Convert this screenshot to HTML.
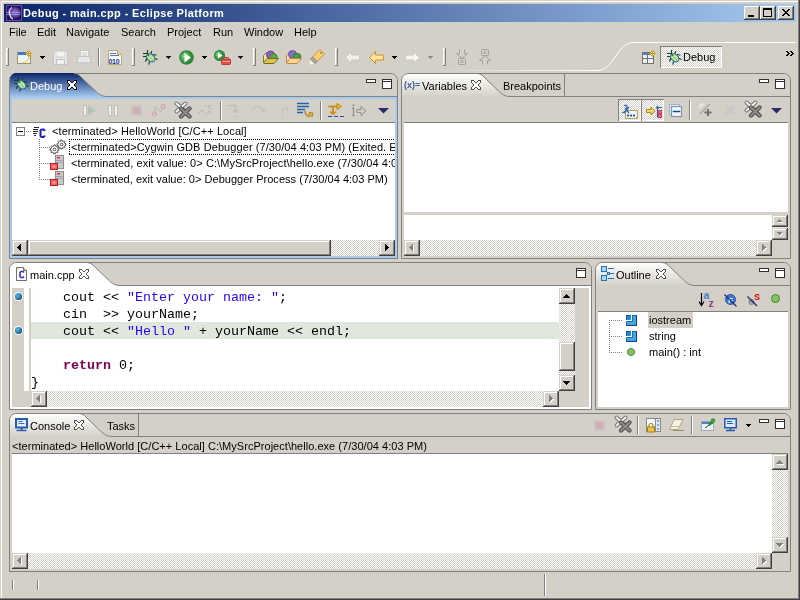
<!DOCTYPE html><html><head><meta charset="utf-8"><style>
*{margin:0;padding:0}
html,body{width:800px;height:600px;overflow:hidden;background:#D4D0C8}
body{position:relative;font:11px 'Liberation Sans',sans-serif}
.a{position:absolute;display:block}
.t{white-space:pre;will-change:transform}
.b3{background:#D4D0C8;box-shadow:inset -1px -1px #404040,inset 1px 1px #D4D0C8,inset -2px -2px #808080,inset 2px 2px #fff}
.ck{background:repeating-conic-gradient(#fff 0 25%,#D4D0C8 0 50%) 0 0/2px 2px}
</style></head><body><div class="a" style="left:1px;top:1px;width:797px;height:1px;background:#fff;"></div>
<div class="a" style="left:1px;top:1px;width:1px;height:597px;background:#fff;"></div>
<div class="a" style="left:798px;top:0px;width:1px;height:599px;background:#808080;"></div>
<div class="a" style="left:0px;top:598px;width:799px;height:1px;background:#808080;"></div>
<div class="a" style="left:799px;top:0px;width:1px;height:600px;background:#404040;"></div>
<div class="a" style="left:0px;top:599px;width:800px;height:1px;background:#404040;"></div>
<div class="a" style="left:4px;top:4px;width:792px;height:18px;background:linear-gradient(to right,#0A246A,#A6CAF0);"></div>
<div class="a t" style="left:23px;top:6.69px;font:bold 11px/13px 'Liberation Sans',sans-serif;color:#fff;letter-spacing:0.37px">Debug - main.cpp - Eclipse Platform</div>
<div class="a" style="left:744px;top:6px;width:16px;height:14px;background:#D4D0C8;box-shadow:inset -1px -1px #404040,inset 1px 1px #fff,inset -2px -2px #808080"></div>
<svg class="a" style="left:744px;top:6px;" width="16" height="14" viewBox="0 0 16 14" shape-rendering="crispEdges"><path d="M4,9h6v2h-6z" fill="#000"/></svg>
<div class="a" style="left:760px;top:6px;width:16px;height:14px;background:#D4D0C8;box-shadow:inset -1px -1px #404040,inset 1px 1px #fff,inset -2px -2px #808080"></div>
<svg class="a" style="left:760px;top:6px;" width="16" height="14" viewBox="0 0 16 14" shape-rendering="crispEdges"><path d="M3,2h9v9h-9z M4,4v6h7v-6z" fill="#000" fill-rule="evenodd"/></svg>
<div class="a" style="left:778px;top:6px;width:16px;height:14px;background:#D4D0C8;box-shadow:inset -1px -1px #404040,inset 1px 1px #fff,inset -2px -2px #808080"></div>
<svg class="a" style="left:778px;top:6px;" width="16" height="14" viewBox="0 0 16 14" shape-rendering="crispEdges"><path d="M4,3h1v1h-1zM5,3h1v1h-1zM10,3h1v1h-1zM11,3h1v1h-1zM5,4h1v1h-1zM6,4h1v1h-1zM9,4h1v1h-1zM10,4h1v1h-1zM6,5h1v1h-1zM7,5h1v1h-1zM8,5h1v1h-1zM9,5h1v1h-1zM7,6h1v1h-1zM8,6h1v1h-1zM6,7h1v1h-1zM7,7h1v1h-1zM8,7h1v1h-1zM9,7h1v1h-1zM5,8h1v1h-1zM6,8h1v1h-1zM9,8h1v1h-1zM10,8h1v1h-1zM4,9h1v1h-1zM5,9h1v1h-1zM10,9h1v1h-1zM11,9h1v1h-1z" fill="#000"/></svg>
<svg class="a" style="left:6px;top:5px;" width="16" height="16" viewBox="0 0 16 16"><defs><radialGradient id="elg" cx="0.5" cy="0.45" r="0.55"><stop offset="0" stop-color="#9A80C8"/><stop offset="0.7" stop-color="#5A3A90"/><stop offset="1" stop-color="#2A1458"/></radialGradient></defs><rect x="0.5" y="0.5" width="15" height="15" fill="#22105A" stroke="#6A4AAA"/><circle cx="9" cy="8" r="6" fill="url(#elg)"/><path d="M1,7.5h13M1,9.5h13" stroke="#8A90F0" stroke-width="1"/><path d="M6,2.5 C3.5,4 3,7 3.5,9 C4,11.5 5,13 7,14" fill="none" stroke="#F0E0F8" stroke-width="1.3"/><path d="M4.5,3.5 L2,5" stroke="#8040C0" stroke-width="1"/></svg>
<div class="a t" style="left:9px;top:25.69px;font:11px/13px 'Liberation Sans',sans-serif;color:#000;">File</div>
<div class="a t" style="left:37px;top:25.69px;font:11px/13px 'Liberation Sans',sans-serif;color:#000;">Edit</div>
<div class="a t" style="left:66px;top:25.69px;font:11px/13px 'Liberation Sans',sans-serif;color:#000;">Navigate</div>
<div class="a t" style="left:121px;top:25.69px;font:11px/13px 'Liberation Sans',sans-serif;color:#000;">Search</div>
<div class="a t" style="left:167px;top:25.69px;font:11px/13px 'Liberation Sans',sans-serif;color:#000;">Project</div>
<div class="a t" style="left:213px;top:25.69px;font:11px/13px 'Liberation Sans',sans-serif;color:#000;">Run</div>
<div class="a t" style="left:244px;top:25.69px;font:11px/13px 'Liberation Sans',sans-serif;color:#000;">Window</div>
<div class="a t" style="left:294px;top:25.69px;font:11px/13px 'Liberation Sans',sans-serif;color:#000;">Help</div>
<svg class="a" style="left:9px;top:73px" width="389" height="186" viewBox="0 0 389 186"><defs><linearGradient id="g9_73" x1="0" y1="0" x2="0" y2="1"><stop offset="0" stop-color="#0A246A"/><stop offset="1" stop-color="#A6CAF0"/></linearGradient></defs><path d="M1,24 V6 L0.5,6 C0.5,4 4,0 6,0 H65 C69,0 71,3 74,6 L86,17.5 C90,21.5 93,23.5 98,23.5 V24 Z" fill="url(#g9_73)"/><path d="M65,0.5 C69,0.5 71,3 74,6 L86,17.5 C90,21.5 93,23.5 98,23.5 H388" fill="none" stroke="#808080" stroke-width="1"/><path d="M0.5,185.5 V6.5 M65,0.5 H382.5 C385,0.5 388.5,4 388.5,6.5 V185.5 H0.5" fill="none" stroke="#808080" stroke-width="1"/></svg>
<div class="a" style="left:10px;top:97px;width:387px;height:2px;background:#A6CAF0;"></div>
<div class="a" style="left:10px;top:256px;width:387px;height:2px;background:#A6CAF0;"></div>
<div class="a" style="left:10px;top:97px;width:2px;height:161px;background:#A6CAF0;"></div>
<div class="a" style="left:395px;top:97px;width:2px;height:161px;background:#A6CAF0;"></div>
<div class="a" style="left:12px;top:122px;width:383px;height:1px;background:#808080;"></div>
<div class="a" style="left:12px;top:123px;width:383px;height:117px;background:#fff;"></div>
<div class="a ck" style="left:12px;top:240px;width:383px;height:16px"></div>
<div class="a b3" style="left:12px;top:240px;width:16px;height:16px;"></div>
<div class="a b3" style="left:28px;top:240px;width:303px;height:16px;"></div>
<div class="a b3" style="left:379px;top:240px;width:16px;height:16px;"></div>
<svg class="a" style="left:401px;top:73px" width="390" height="186" viewBox="0 0 390 186"><defs><linearGradient id="g401_73" x1="0" y1="0" x2="0" y2="1"><stop offset="0" stop-color="#FFFFFF"/><stop offset="1" stop-color="#D4D0C8"/></linearGradient></defs><path d="M1,24 V6.5 C1,4 4,1 6.5,1 H76 C80,1 82,3 85,6 L97,17.5 C101,21.5 104,23.5 109,23.5 V24 Z" fill="url(#g401_73)"/><path d="M76,0.5 C80,0.5 82,3 85,6 L97,17.5 C101,21.5 104,23.5 109,23.5 H389" fill="none" stroke="#808080" stroke-width="1"/><path d="M0.5,185.5 V6.5 C0.5,4 4,0.5 6.5,0.5 H383.5 C386,0.5 389.5,4 389.5,6.5 V185.5 H0.5" fill="none" stroke="#808080" stroke-width="1"/></svg>
<div class="a" style="left:564px;top:74px;width:1px;height:22px;background:#808080;"></div>
<div class="a" style="left:404px;top:122px;width:384px;height:1px;background:#808080;"></div>
<div class="a" style="left:404px;top:123px;width:384px;height:89px;background:#fff;"></div>
<div class="a" style="left:404px;top:215px;width:368px;height:25px;background:#fff;"></div>
<div class="a ck" style="left:772px;top:215px;width:16px;height:25px"></div>
<div class="a b3" style="left:772px;top:215px;width:16px;height:12px;"></div>
<div class="a b3" style="left:772px;top:228px;width:16px;height:12px;"></div>
<div class="a ck" style="left:404px;top:240px;width:368px;height:16px"></div>
<div class="a b3" style="left:404px;top:240px;width:16px;height:16px;"></div>
<div class="a b3" style="left:756px;top:240px;width:16px;height:16px;"></div>
<svg class="a" style="left:9px;top:262px" width="583" height="148" viewBox="0 0 583 148"><defs><linearGradient id="g9_262" x1="0" y1="0" x2="0" y2="1"><stop offset="0" stop-color="#FFFFFF"/><stop offset="1" stop-color="#FFFFFF"/></linearGradient></defs><path d="M1,24 V6.5 C1,4 4,1 6.5,1 H78 C82,1 84,3 87,6 L99,17.5 C103,21.5 106,23.5 111,23.5 V24 Z" fill="url(#g9_262)"/><path d="M78,0.5 C82,0.5 84,3 87,6 L99,17.5 C103,21.5 106,23.5 111,23.5 H582" fill="none" stroke="#808080" stroke-width="1"/><path d="M0.5,147.5 V6.5 C0.5,4 4,0.5 6.5,0.5 H576.5 C579,0.5 582.5,4 582.5,6.5 V147.5 H0.5" fill="none" stroke="#808080" stroke-width="1"/></svg>
<div class="a" style="left:10px;top:286px;width:581px;height:123px;background:#fff;"></div>
<div class="a" style="left:12px;top:288px;width:12px;height:103px;background:#D4D0C8;"></div>
<div class="a ck" style="left:559px;top:288px;width:16px;height:103px"></div>
<div class="a b3" style="left:559px;top:288px;width:16px;height:16px;"></div>
<div class="a b3" style="left:559px;top:342px;width:16px;height:29px;"></div>
<div class="a b3" style="left:559px;top:375px;width:16px;height:16px;"></div>
<div class="a" style="left:575px;top:288px;width:14px;height:119px;background:#D4D0C8;"></div>
<div class="a ck" style="left:31px;top:391px;width:528px;height:16px"></div>
<div class="a b3" style="left:31px;top:391px;width:16px;height:16px;"></div>
<div class="a b3" style="left:543px;top:391px;width:16px;height:16px;"></div>
<div class="a" style="left:12px;top:391px;width:19px;height:16px;background:#D4D0C8;"></div>
<svg class="a" style="left:595px;top:262px" width="196" height="148" viewBox="0 0 196 148"><defs><linearGradient id="g595_262" x1="0" y1="0" x2="0" y2="1"><stop offset="0" stop-color="#FFFFFF"/><stop offset="1" stop-color="#D4D0C8"/></linearGradient></defs><path d="M1,24 V6.5 C1,4 4,1 6.5,1 H67 C71,1 73,3 76,6 L88,17.5 C92,21.5 95,23.5 100,23.5 V24 Z" fill="url(#g595_262)"/><path d="M67,0.5 C71,0.5 73,3 76,6 L88,17.5 C92,21.5 95,23.5 100,23.5 H195" fill="none" stroke="#808080" stroke-width="1"/><path d="M0.5,147.5 V6.5 C0.5,4 4,0.5 6.5,0.5 H189.5 C192,0.5 195.5,4 195.5,6.5 V147.5 H0.5" fill="none" stroke="#808080" stroke-width="1"/></svg>
<div class="a" style="left:598px;top:311px;width:190px;height:1px;background:#808080;"></div>
<div class="a" style="left:598px;top:312px;width:190px;height:95px;background:#fff;"></div>
<svg class="a" style="left:9px;top:413px" width="782" height="159" viewBox="0 0 782 159"><defs><linearGradient id="g9_413" x1="0" y1="0" x2="0" y2="1"><stop offset="0" stop-color="#FFFFFF"/><stop offset="1" stop-color="#D4D0C8"/></linearGradient></defs><path d="M1,24 V6.5 C1,4 4,1 6.5,1 H70 C74,1 76,3 79,6 L91,17.5 C95,21.5 98,23.5 103,23.5 V24 Z" fill="url(#g9_413)"/><path d="M70,0.5 C74,0.5 76,3 79,6 L91,17.5 C95,21.5 98,23.5 103,23.5 H781" fill="none" stroke="#808080" stroke-width="1"/><path d="M0.5,158.5 V6.5 C0.5,4 4,0.5 6.5,0.5 H775.5 C778,0.5 781.5,4 781.5,6.5 V158.5 H0.5" fill="none" stroke="#808080" stroke-width="1"/></svg>
<div class="a" style="left:138px;top:414px;width:1px;height:22px;background:#808080;"></div>
<div class="a" style="left:12px;top:453px;width:776px;height:1px;background:#808080;"></div>
<div class="a" style="left:12px;top:454px;width:760px;height:99px;background:#fff;"></div>
<div class="a ck" style="left:772px;top:454px;width:16px;height:99px"></div>
<div class="a b3" style="left:772px;top:454px;width:16px;height:16px;"></div>
<div class="a b3" style="left:772px;top:537px;width:16px;height:16px;"></div>
<div class="a ck" style="left:12px;top:553px;width:760px;height:16px"></div>
<div class="a b3" style="left:12px;top:553px;width:16px;height:16px;"></div>
<div class="a b3" style="left:756px;top:553px;width:16px;height:16px;"></div>
<div class="a" style="left:12px;top:580px;width:1px;height:10px;background:#808080;"></div>
<div class="a" style="left:13px;top:580px;width:1px;height:10px;background:#fff;"></div>
<div class="a" style="left:37px;top:580px;width:1px;height:10px;background:#808080;"></div>
<div class="a" style="left:38px;top:580px;width:1px;height:10px;background:#fff;"></div>
<div class="a" style="left:544px;top:574px;width:1px;height:22px;background:#808080;"></div>
<div class="a" style="left:545px;top:574px;width:1px;height:22px;background:#fff;"></div>
<div class="a" style="left:6px;top:48px;width:1px;height:17px;background:#fff;"></div>
<div class="a" style="left:6px;top:48px;width:2px;height:1px;background:#fff;"></div>
<div class="a" style="left:8px;top:48px;width:1px;height:18px;background:#808080;"></div>
<div class="a" style="left:6px;top:65px;width:3px;height:1px;background:#808080;"></div>
<svg class="a" style="left:17px;top:50px;" width="15" height="15" viewBox="0 0 15 15"><rect x="0.5" y="2.5" width="13" height="11" fill="#EAF6FC" stroke="#A89060"/><rect x="1" y="2" width="11" height="3" fill="#3C7CC8"/><path d="M12,6 Q12,12 5,13" stroke="#F0C040" fill="none"/><path d="M11.5,0.5 L14.5,3.5 L11.5,6.5 L8.5,3.5 Z" fill="#F8E8A0" stroke="#C09020"/><path d="M11.5,1.5v4M9.5,3.5h4" stroke="#C09020"/></svg>
<svg class="a" style="left:40px;top:56px;" width="5" height="3" viewBox="0 0 5 3" shape-rendering="crispEdges"><path d="M0,0h5v1h-1v1h-1v1h-1v-1h-1v-1h-1z" fill="#000"/></svg>
<svg class="a" style="left:53px;top:50px;" width="15" height="15" viewBox="0 0 15 15"><path d="M0.5,0.5h14v14h-14z" fill="#E8E8E8" stroke="#C4C4C4"/><rect x="3" y="1" width="9" height="6" fill="#F4F4F4" stroke="#D0D0D0"/><rect x="3.5" y="9.5" width="8" height="5" fill="#F0F0F0" stroke="#C4C4C4"/></svg>
<svg class="a" style="left:77px;top:50px;" width="15" height="15" viewBox="0 0 15 15"><rect x="3.5" y="0.5" width="8" height="7" fill="#F4F4F4" stroke="#C8C8C8"/><path d="M5,3h5M5,5h5" stroke="#C8C8C8"/><rect x="0.5" y="6.5" width="13" height="6" fill="#E8E8E8" stroke="#C4C4C4"/><rect x="1" y="12" width="12" height="2" fill="#CCCCD4"/></svg>
<div class="a" style="left:98px;top:48px;width:1px;height:18px;background:#808080;"></div>
<div class="a" style="left:99px;top:48px;width:1px;height:18px;background:#fff;"></div>
<svg class="a" style="left:108px;top:50px;" width="15" height="15" viewBox="0 0 15 15"><path d="M0.5,0.5h9l4,4v10h-13z" fill="#F8F8FF" stroke="#B8A878"/><path d="M9.5,0.5v4h4" fill="#E8D898" stroke="#B8A878"/><path d="M2,3.5h6M2,5.5h9" stroke="#5A7AB8"/><text x="0.5" y="13.5" font-family="Liberation Sans" font-weight="bold" font-size="7" fill="#1A3A7A" letter-spacing="-0.3">010</text></svg>
<div class="a" style="left:132px;top:48px;width:1px;height:17px;background:#fff;"></div>
<div class="a" style="left:132px;top:48px;width:2px;height:1px;background:#fff;"></div>
<div class="a" style="left:134px;top:48px;width:1px;height:18px;background:#808080;"></div>
<div class="a" style="left:132px;top:65px;width:3px;height:1px;background:#808080;"></div>
<svg class="a" style="left:140px;top:48px;" width="20" height="18" viewBox="0 0 20 18"><g stroke="#1A3A2A" stroke-width="1.1" fill="none"><path d="M7.5,2 V6.5 M11.7,3 L10.7,6.5 M3,5.5 H7.5 M3,8.5 H6.5 L7,9.5 M6.8,10 L5.5,13.8 M13,6.5 L16.5,7.3 M15,10.5 L17.6,11.6 M9.8,13 L8.6,16.6"/></g><ellipse cx="10.7" cy="9.8" rx="4.7" ry="3.4" transform="rotate(45 10.7 9.8)" fill="#C4E4A4" stroke="#1E6E8C" stroke-width="1.1"/><path d="M9.5,9 L13,12.3" stroke="#7AB868" stroke-width="1"/><circle cx="8.5" cy="7.3" r="1" fill="#2A6A2A"/></svg>
<svg class="a" style="left:166px;top:56px;" width="5" height="3" viewBox="0 0 5 3" shape-rendering="crispEdges"><path d="M0,0h5v1h-1v1h-1v1h-1v-1h-1v-1h-1z" fill="#000"/></svg>
<svg class="a" style="left:179px;top:50px;" width="15" height="15" viewBox="0 0 15 15"><defs><radialGradient id="rg" cx="0.35" cy="0.4" r="0.75"><stop offset="0" stop-color="#A0D8A0"/><stop offset="0.5" stop-color="#3A9A48"/><stop offset="1" stop-color="#1E7A2A"/></radialGradient></defs><circle cx="7.5" cy="7.5" r="6.6" fill="url(#rg)" stroke="#2A8A3A" stroke-width="1.3"/><path d="M5.5,2.5 L12,7.5 L5.5,12.5 Z" fill="#fff"/><path d="M5.5,2.5 L12,7.5" stroke="#60D040" stroke-width="0.8"/></svg>
<svg class="a" style="left:202px;top:56px;" width="5" height="3" viewBox="0 0 5 3" shape-rendering="crispEdges"><path d="M0,0h5v1h-1v1h-1v1h-1v-1h-1v-1h-1z" fill="#000"/></svg>
<svg class="a" style="left:214px;top:49px;" width="17" height="17" viewBox="0 0 17 17"><defs><radialGradient id="rg2" cx="0.35" cy="0.4" r="0.75"><stop offset="0" stop-color="#A0D8A0"/><stop offset="0.5" stop-color="#3A9A48"/><stop offset="1" stop-color="#1E7A2A"/></radialGradient></defs><circle cx="5.5" cy="6.5" r="5" fill="url(#rg2)" stroke="#2A8A3A" stroke-width="1.1"/><path d="M4,3.5 L8.5,6.5 L4,9.5 Z" fill="#fff"/><rect x="7.5" y="10" width="9" height="5.5" rx="1" fill="#D85048" stroke="#C03830" stroke-width="1"/><rect x="10" y="8.5" width="4" height="2" fill="none" stroke="#C03830" stroke-width="1"/><path d="M8,12.5h8" stroke="#F0A090"/></svg>
<svg class="a" style="left:238px;top:56px;" width="5" height="3" viewBox="0 0 5 3" shape-rendering="crispEdges"><path d="M0,0h5v1h-1v1h-1v1h-1v-1h-1v-1h-1z" fill="#000"/></svg>
<div class="a" style="left:253px;top:48px;width:1px;height:17px;background:#fff;"></div>
<div class="a" style="left:253px;top:48px;width:2px;height:1px;background:#fff;"></div>
<div class="a" style="left:255px;top:48px;width:1px;height:18px;background:#808080;"></div>
<div class="a" style="left:253px;top:65px;width:3px;height:1px;background:#808080;"></div>
<svg class="a" style="left:263px;top:50px;" width="16" height="14" viewBox="0 0 16 14"><path d="M0.5,5.5 L3,3 h3 v9 L0.5,12.5z" fill="#F0E8A0" stroke="#7A7A40"/><circle cx="7.5" cy="5" r="4" fill="#9060C0" stroke="#7040A0"/><circle cx="10.5" cy="7.5" r="3.8" fill="#5AAA4A" stroke="#3A8A2A"/><path d="M0.5,12.5 L4,8.5 H15.5 L11,13.5 H1z" fill="#E0C040" stroke="#6A6A3A"/></svg>
<svg class="a" style="left:286px;top:50px;" width="16" height="14" viewBox="0 0 16 14"><path d="M0.5,5.5 L3,3 h3 v9 L0.5,12.5z" fill="#FCE8B0" stroke="#C08040"/><circle cx="6.5" cy="4.5" r="4" fill="#8870C8" stroke="#6850A8"/><circle cx="11" cy="7" r="3.8" fill="#40A040" stroke="#2A802A"/><path d="M0.5,12.5 L4,8.5 H15.5 L11,13.5 H1z" fill="#F8D890" stroke="#C08040"/></svg>
<svg class="a" style="left:309px;top:49px;" width="16" height="16" viewBox="0 0 16 16"><path d="M11,0.5 L15.5,5 L8,12.5 L3.5,8z" fill="#F8D070" stroke="#D09030"/><path d="M3.5,8 L8,12.5 L5.5,15 L1,10.5z" fill="#A8A4B8" stroke="#908CA0"/><path d="M1,10.5 L5.5,15 L0.5,15.5z" fill="#FFF8C0"/><circle cx="12" cy="4" r="0.8" fill="#3050A0"/></svg>
<div class="a" style="left:335px;top:48px;width:1px;height:17px;background:#fff;"></div>
<div class="a" style="left:335px;top:48px;width:2px;height:1px;background:#fff;"></div>
<div class="a" style="left:337px;top:48px;width:1px;height:18px;background:#808080;"></div>
<div class="a" style="left:335px;top:65px;width:3px;height:1px;background:#808080;"></div>
<svg class="a" style="left:345px;top:51px;" width="15" height="13" viewBox="0 0 15 13"><path d="M0.5,6.5 L6.5,0.5 V4 H14.5 V9 H6.5 V12.5 Z" fill="#F0F0EC" stroke="#C8C8C0" stroke-linejoin="round"/></svg>
<svg class="a" style="left:369px;top:51px;" width="15" height="13" viewBox="0 0 15 13"><path d="M0.5,6.5 L6.5,0.5 V4 H14.5 V9 H6.5 V12.5 Z" fill="#FCE4A0" stroke="#D09028" stroke-linejoin="round"/></svg>
<svg class="a" style="left:392px;top:56px;" width="5" height="3" viewBox="0 0 5 3" shape-rendering="crispEdges"><path d="M0,0h5v1h-1v1h-1v1h-1v-1h-1v-1h-1z" fill="#000"/></svg>
<svg class="a" style="left:405px;top:51px;" width="15" height="13" viewBox="0 0 15 13"><path d="M14.5,6.5 L8.5,0.5 V4 H0.5 V9 H8.5 V12.5 Z" fill="#F4F4F0" stroke="#C8C8C0" stroke-linejoin="round"/></svg>
<svg class="a" style="left:428px;top:56px;" width="5" height="3" viewBox="0 0 5 3" shape-rendering="crispEdges"><path d="M0,0h5v1h-1v1h-1v1h-1v-1h-1v-1h-1z" fill="#909090"/></svg>
<div class="a" style="left:443px;top:48px;width:1px;height:17px;background:#fff;"></div>
<div class="a" style="left:443px;top:48px;width:2px;height:1px;background:#fff;"></div>
<div class="a" style="left:445px;top:48px;width:1px;height:18px;background:#808080;"></div>
<div class="a" style="left:443px;top:65px;width:3px;height:1px;background:#808080;"></div>
<svg class="a" style="left:456px;top:49px;" width="12" height="16" viewBox="0 0 12 16"><path d="M3.5,0.5v4h-3l5.5,5l5.5,-5h-3v-4" fill="none" stroke="#A0A0A0"/><rect x="2.5" y="9.5" width="7" height="6" rx="1" fill="none" stroke="#A0A0A0"/><path d="M4.5,11l3,3M7.5,11l-3,3" stroke="#A0A0A0"/></svg>
<svg class="a" style="left:479px;top:49px;" width="12" height="16" viewBox="0 0 12 16"><rect x="2.5" y="0.5" width="7" height="6" rx="1" fill="none" stroke="#A0A0A0"/><path d="M4.5,2l3,3M7.5,2l-3,3" stroke="#A0A0A0"/><path d="M3.5,15.5v-4h-3l5.5,-5l5.5,5h-3v4" fill="none" stroke="#A0A0A0"/></svg>
<svg class="a" style="left:0px;top:0px;" width="800" height="80" viewBox="0 0 800 80"><path d="M597,70.5 C606,70.5 610,64 616,56 C622,47 626,42.5 634,42.5 H796" fill="none" stroke="#fff" stroke-width="1"/></svg>
<div class="a" style="left:430px;top:70px;width:168px;height:1px;background:linear-gradient(to right,#D4D0C8,#fff);"></div>
<svg class="a" style="left:642px;top:50px;" width="14" height="14" viewBox="0 0 14 14"><rect x="0.5" y="2.5" width="11" height="11" fill="#E8F4FC" stroke="#7A7060"/><rect x="1" y="3" width="10" height="2" fill="#4A80C8"/><path d="M1,8.5h10M5.5,5v8" stroke="#7A7060"/><path d="M10.5,0.5 L13.5,3.5 L10.5,6.5 L7.5,3.5 Z" fill="#F8E8A0" stroke="#C09020"/><path d="M10.5,1.5v4M8.5,3.5h4" stroke="#C09020"/></svg>
<div class="a ck" style="left:660px;top:46px;width:62px;height:22px;box-shadow:inset 1px 1px #808080,inset -1px -1px #fff"></div>
<svg class="a" style="left:664px;top:48px;" width="20" height="18" viewBox="0 0 20 18"><g stroke="#1A3A2A" stroke-width="1.1" fill="none"><path d="M7.5,2 V6.5 M11.7,3 L10.7,6.5 M3,5.5 H7.5 M3,8.5 H6.5 L7,9.5 M6.8,10 L5.5,13.8 M13,6.5 L16.5,7.3 M15,10.5 L17.6,11.6 M9.8,13 L8.6,16.6"/></g><ellipse cx="10.7" cy="9.8" rx="4.7" ry="3.4" transform="rotate(45 10.7 9.8)" fill="#C4E4A4" stroke="#1E6E8C" stroke-width="1.1"/><path d="M9.5,9 L13,12.3" stroke="#7AB868" stroke-width="1"/><circle cx="8.5" cy="7.3" r="1" fill="#2A6A2A"/></svg>
<div class="a t" style="left:683px;top:50.69px;font:11px/13px 'Liberation Sans',sans-serif;color:#000;">Debug</div>
<svg class="a" style="left:786px;top:51px;" width="8" height="5" viewBox="0 0 8 5" shape-rendering="crispEdges"><path d="M0,0h1v1h-1zM1,0h1v1h-1zM4,0h1v1h-1zM5,0h1v1h-1zM1,1h1v1h-1zM2,1h1v1h-1zM5,1h1v1h-1zM6,1h1v1h-1zM2,2h1v1h-1zM3,2h1v1h-1zM6,2h1v1h-1zM7,2h1v1h-1zM1,3h1v1h-1zM2,3h1v1h-1zM5,3h1v1h-1zM6,3h1v1h-1zM0,4h1v1h-1zM1,4h1v1h-1zM4,4h1v1h-1zM5,4h1v1h-1z" fill="#000"/></svg>
<svg class="a" style="left:11px;top:75px;" width="20" height="18" viewBox="0 0 20 18"><g stroke="#1A3A2A" stroke-width="1.1" fill="none"><path d="M7.5,2 V6.5 M11.7,3 L10.7,6.5 M3,5.5 H7.5 M3,8.5 H6.5 L7,9.5 M6.8,10 L5.5,13.8 M13,6.5 L16.5,7.3 M15,10.5 L17.6,11.6 M9.8,13 L8.6,16.6"/></g><ellipse cx="10.7" cy="9.8" rx="4.7" ry="3.4" transform="rotate(45 10.7 9.8)" fill="#C4E4A4" stroke="#1E6E8C" stroke-width="1.1"/><path d="M9.5,9 L13,12.3" stroke="#7AB868" stroke-width="1"/><circle cx="8.5" cy="7.3" r="1" fill="#2A6A2A"/></svg>
<div class="a t" style="left:30px;top:79.69px;font:11px/13px 'Liberation Sans',sans-serif;color:#fff;">Debug</div>
<svg class="a" style="left:67px;top:80px;" width="10" height="10" viewBox="0 0 10 10" shape-rendering="crispEdges"><path d="M0.5,0.5 L2.5,0.5 L4.5,2.5 L5.5,2.5 L7.5,0.5 L9.5,0.5 L9.5,2.5 L7.5,4.5 L7.5,5.5 L9.5,7.5 L9.5,9.5 L7.5,9.5 L5.5,7.5 L4.5,7.5 L2.5,9.5 L0.5,9.5 L0.5,7.5 L2.5,5.5 L2.5,4.5 L0.5,2.5Z" fill="#fff" stroke="#000" stroke-width="1"/></svg>
<div class="a" style="left:366px;top:79px;width:8px;height:2px;background:#fff;border:1px solid #303030"></div>
<div class="a" style="left:382px;top:79px;width:8px;height:8px;background:#fff;border:1px solid #303030;box-shadow:inset 0 1px #fff,inset 0 2px #303030"></div>
<svg class="a" style="left:83px;top:104px;" width="15" height="13" viewBox="0 0 15 13"><rect x="0.5" y="1.5" width="3" height="10" fill="#F0F0E8" stroke="#C0C0B8"/><path d="M5,1.5 L13,6.5 L5,11.5z" fill="#B0C4B8"/></svg>
<svg class="a" style="left:108px;top:105px;" width="11" height="12" viewBox="0 0 11 12"><rect x="0.5" y="0.5" width="3" height="10" fill="#F0F0E8" stroke="#C0C0B8"/><rect x="6.5" y="0.5" width="3" height="10" fill="#F0F0E8" stroke="#C0C0B8"/></svg>
<svg class="a" style="left:131px;top:105px;" width="12" height="12" viewBox="0 0 12 12"><rect x="0.5" y="0.5" width="10" height="10" fill="#D8C0C4" stroke="#C8C4C0"/><rect x="2" y="2" width="7" height="7" fill="#CCB0B8"/></svg>
<svg class="a" style="left:152px;top:104px;" width="14" height="13" viewBox="0 0 14 13"><path d="M2.5,9 L3.5,3 L9,8 L10.5,2" fill="none" stroke="#B8B8B8"/><circle cx="2.5" cy="10" r="2" fill="#E8C0C8" stroke="#C8A0A8"/><circle cx="11" cy="2.5" r="2" fill="#E8C0C8" stroke="#C8A0A8"/></svg>
<svg class="a" style="left:172px;top:100px;" width="22" height="22" viewBox="0 0 22 22"><path d="M4.5,3.5 L13.5,11.5 M13.5,3.5 L4.5,11.5" stroke="#707070" stroke-width="4" stroke-linecap="round"/><path d="M4.5,3.5 L13.5,11.5 M13.5,3.5 L4.5,11.5" stroke="#F4F4F4" stroke-width="2" stroke-linecap="round"/><path d="M9,8.5 L17.5,16.5 M17.5,8.5 L9,16.5" stroke="#505050" stroke-width="4.4" stroke-linecap="round"/><path d="M9,8.5 L17.5,16.5 M17.5,8.5 L9,16.5" stroke="#8C8C8C" stroke-width="2.2" stroke-linecap="round"/></svg>
<svg class="a" style="left:197px;top:104px;" width="16" height="14" viewBox="0 0 16 14"><path d="M1,10 L5,6 L5,8 L8,5 M8,11 L12,7 L12,9 L15,6 M9,2 L13,2 L13,5" fill="none" stroke="#A0A0A0" stroke-dasharray="1 1"/></svg>
<div class="a" style="left:220px;top:101px;width:1px;height:19px;background:#808080;"></div>
<div class="a" style="left:221px;top:101px;width:1px;height:19px;background:#fff;"></div>
<svg class="a" style="left:228px;top:103px;" width="16" height="15" viewBox="0 0 16 15"><path d="M0.5,2.5 H7.5 V9" fill="none" stroke="#B8B8B8"/><path d="M5,7 L7.5,10 L10,7" fill="none" stroke="#B8B8B8"/><path d="M1,13.5h3M6,13.5h3M11,13.5h3" stroke="#C8C8C8"/></svg>
<svg class="a" style="left:251px;top:103px;" width="16" height="15" viewBox="0 0 16 15"><path d="M2,8 C2,2 12,2 12,8" fill="none" stroke="#C0C0C0" stroke-width="1.5"/><path d="M9.5,6 L12,9 L14.5,6" fill="none" stroke="#C0C0C0" stroke-width="1.2"/><path d="M1,13.5h3M6,13.5h3" stroke="#C8C8C8"/></svg>
<svg class="a" style="left:276px;top:103px;" width="15" height="15" viewBox="0 0 15 15"><path d="M6.5,12 V5.5 H12" fill="none" stroke="#C0C0C0"/><path d="M10,3 L13,5.5 L10,8" fill="none" stroke="#C0C0C0"/><path d="M0,13.5h3M5,13.5h3M10,13.5h3" stroke="#C8C8C8"/></svg>
<svg class="a" style="left:297px;top:102px;" width="17" height="16" viewBox="0 0 17 16"><path d="M0,1.5h12M0,4.5h12M0,7.5h8M0,10.5h6" stroke="#2060B0" stroke-width="1.6"/><path d="M8,9 C9,13 11,14 13,12 L12,10.5 L16,11 L15,15 L14,13.5 C11,16 8,14 8,9z" fill="#F0C030" stroke="#A07010" stroke-width="0.8"/></svg>
<div class="a" style="left:320px;top:101px;width:1px;height:19px;background:#808080;"></div>
<div class="a" style="left:321px;top:101px;width:1px;height:19px;background:#fff;"></div>
<svg class="a" style="left:328px;top:103px;" width="16" height="15" viewBox="0 0 16 15"><path d="M0.5,3.5 H10 M5,3.5 V11" fill="none" stroke="#C89020" stroke-width="2"/><path d="M9,0.5 L13.5,3.5 L9,6.5z" fill="#F0C030" stroke="#B08010"/><path d="M2,8.5 L5,11.5 L8,8.5" fill="none" stroke="#C89020" stroke-width="1.5"/><path d="M0,13.5h4M6,13.5h4M12,13.5h4" stroke="#2050A0" stroke-width="1.2"/></svg>
<svg class="a" style="left:351px;top:104px;" width="16" height="13" viewBox="0 0 16 13"><path d="M2.5,3v8M1,11.5h3M1,4.5h2" stroke="#909090" stroke-width="1.2"/><circle cx="2.5" cy="1.2" r="1" fill="#909090"/><path d="M6,5.5h4v-3l5,4.5l-5,4.5v-3h-4z" fill="none" stroke="#909090"/></svg>
<svg class="a" style="left:378px;top:108px;" width="11" height="6" viewBox="0 0 11 6"><path d="M0,0 H11 L5.5,5.5z" fill="#2A2A6A"/><path d="M0,0 L5.5,5.5" stroke="#8080A0" stroke-width="0.6"/></svg>
<div class="a" style="left:16px;top:127px;width:7px;height:7px;background:#fff;border:1px solid #808080"></div>
<div class="a" style="left:18px;top:131px;width:5px;height:1px;background:#000;"></div>
<div class="a" style="left:26px;top:131px;width:6px;height:1px;background:repeating-linear-gradient(to right,#808080 0 1px,transparent 1px 2px)"></div>
<svg class="a" style="left:33px;top:127px;" width="13" height="12" viewBox="0 0 13 12"><path d="M1,0.5h5M0,2.5h5M0,4.5h5M0,6.5h4M1,8.5h2" stroke="#202030"/><path d="M11.5,4 V3.5 L10.5,2.5 H8.5 L7.5,3.5 V9 L8.5,10 H10.5 L11.5,9 V8.5" fill="none" stroke="#2020C8" stroke-width="2" stroke-linejoin="round"/></svg>
<div class="a t" style="left:52px;top:124.69px;font:11px/13px 'Liberation Sans',sans-serif;color:#000;letter-spacing:0.08px;">&lt;terminated&gt; HelloWorld [C/C++ Local]</div>
<div class="a" style="left:39px;top:139px;width:1px;height:41px;background:repeating-linear-gradient(to bottom,#808080 0 1px,transparent 1px 2px)"></div>
<div class="a" style="left:41px;top:147px;width:9px;height:1px;background:repeating-linear-gradient(to right,#808080 0 1px,transparent 1px 2px)"></div>
<div class="a" style="left:41px;top:163px;width:9px;height:1px;background:repeating-linear-gradient(to right,#808080 0 1px,transparent 1px 2px)"></div>
<div class="a" style="left:41px;top:179px;width:9px;height:1px;background:repeating-linear-gradient(to right,#808080 0 1px,transparent 1px 2px)"></div>
<svg class="a" style="left:48px;top:138px;" width="20" height="18" viewBox="0 0 20 18"><path d="M17.93,5.71 L17.93,7.29 L16.92,7.25 L16.37,8.50 L17.19,9.07 L16.07,10.19 L15.39,9.45 L14.12,9.95 L14.29,10.93 L12.71,10.93 L12.75,9.92 L11.50,9.37 L10.93,10.19 L9.81,9.07 L10.55,8.39 L10.05,7.12 L9.07,7.29 L9.07,5.71 L10.08,5.75 L10.63,4.50 L9.81,3.93 L10.93,2.81 L11.61,3.55 L12.88,3.05 L12.71,2.07 L14.29,2.07 L14.25,3.08 L15.50,3.63 L16.07,2.81 L17.19,3.93 L16.45,4.61 L16.95,5.88Z" fill="#fff" stroke="#404040" stroke-width="0.9" stroke-linejoin="round"/><circle cx="13.5" cy="6.5" r="1.3" fill="#fff" stroke="#404040" stroke-width="0.9"/><path d="M10.93,10.61 L10.93,12.19 L9.92,12.15 L9.37,13.40 L10.19,13.97 L9.07,15.09 L8.39,14.35 L7.12,14.85 L7.29,15.83 L5.71,15.83 L5.75,14.82 L4.50,14.27 L3.93,15.09 L2.81,13.97 L3.55,13.29 L3.05,12.02 L2.07,12.19 L2.07,10.61 L3.08,10.65 L3.63,9.40 L2.81,8.83 L3.93,7.71 L4.61,8.45 L5.88,7.95 L5.71,6.97 L7.29,6.97 L7.25,7.98 L8.50,8.53 L9.07,7.71 L10.19,8.83 L9.45,9.51 L9.95,10.78Z" fill="#fff" stroke="#404040" stroke-width="0.9" stroke-linejoin="round"/><circle cx="6.5" cy="11.4" r="1.3" fill="#fff" stroke="#404040" stroke-width="0.9"/></svg>
<div class="a" style="left:69px;top:139px;width:326px;height:16px;background:repeating-linear-gradient(to right,#000 0 1px,transparent 1px 2px) top/100% 1px no-repeat,repeating-linear-gradient(to right,#000 0 1px,transparent 1px 2px) bottom/100% 1px no-repeat,repeating-linear-gradient(to bottom,#000 0 1px,transparent 1px 2px) left/1px 100% no-repeat"></div>
<div class="a t" style="left:71px;top:140.69px;font:11px/13px 'Liberation Sans',sans-serif;color:#000;letter-spacing:0.08px;width:324px;overflow:hidden;">&lt;terminated&gt;Cygwin GDB Debugger (7/30/04 4:03 PM) (Exited. Exit value: 0)</div>
<svg class="a" style="left:50px;top:155px;" width="14" height="15" viewBox="0 0 14 15"><rect x="5.5" y="0.5" width="8" height="13" fill="#C8C8D0" stroke="#909080"/><rect x="7" y="2" width="3" height="1.5" fill="#E03040"/><path d="M6,5.5h7M6,7.5h7" stroke="#A0A0A8"/><rect x="0.5" y="8.5" width="7" height="6" fill="#F06060" stroke="#C02020"/><rect x="2.5" y="10.5" width="3" height="2" fill="#F8A0A0"/></svg>
<div class="a t" style="left:71px;top:156.69px;font:11px/13px 'Liberation Sans',sans-serif;color:#000;letter-spacing:0.08px;width:324px;overflow:hidden;">&lt;terminated, exit value: 0&gt; C:\MySrcProject\hello.exe (7/30/04 4:03 PM)</div>
<svg class="a" style="left:50px;top:171px;" width="14" height="15" viewBox="0 0 14 15"><rect x="5.5" y="0.5" width="8" height="13" fill="#C8C8D0" stroke="#909080"/><rect x="7" y="2" width="3" height="1.5" fill="#E03040"/><path d="M6,5.5h7M6,7.5h7" stroke="#A0A0A8"/><rect x="0.5" y="8.5" width="7" height="6" fill="#F06060" stroke="#C02020"/><rect x="2.5" y="10.5" width="3" height="2" fill="#F8A0A0"/></svg>
<div class="a t" style="left:71px;top:172.69px;font:11px/13px 'Liberation Sans',sans-serif;color:#000;letter-spacing:0.03px;">&lt;terminated, exit value: 0&gt; Debugger Process (7/30/04 4:03 PM)</div>
<svg class="a" style="left:17px;top:244px;" width="4" height="7" viewBox="0 0 4 7" shape-rendering="crispEdges"><path d="M3,0h1v7h-1v-1h-1v-1h-1v-1h-1v-1h1v-1h1v-1h1z" fill="#000"/></svg>
<svg class="a" style="left:385px;top:244px;" width="4" height="7" viewBox="0 0 4 7" shape-rendering="crispEdges"><path d="M0,0h1v1h1v1h1v1h1v1h-1v1h-1v1h-1v1h-1z" fill="#000"/></svg>
<svg class="a" style="left:404px;top:80px;" width="18" height="10" viewBox="0 0 18 10"><text x="0" y="8" font-family="Liberation Sans" font-weight="bold" font-size="9" fill="#3A5E94">(x)=</text></svg>
<div class="a t" style="left:422px;top:79.69px;font:11px/13px 'Liberation Sans',sans-serif;color:#000;">Variables</div>
<svg class="a" style="left:471px;top:80px;" width="10" height="10" viewBox="0 0 10 10" shape-rendering="crispEdges"><path d="M0.5,0.5 L2.5,0.5 L4.5,2.5 L5.5,2.5 L7.5,0.5 L9.5,0.5 L9.5,2.5 L7.5,4.5 L7.5,5.5 L9.5,7.5 L9.5,9.5 L7.5,9.5 L5.5,7.5 L4.5,7.5 L2.5,9.5 L0.5,9.5 L0.5,7.5 L2.5,5.5 L2.5,4.5 L0.5,2.5Z" fill="#fff" stroke="#505050" stroke-width="1"/></svg>
<div class="a t" style="left:503px;top:79.69px;font:11px/13px 'Liberation Sans',sans-serif;color:#000;">Breakpoints</div>
<div class="a" style="left:759px;top:79px;width:8px;height:2px;background:#fff;border:1px solid #303030"></div>
<div class="a" style="left:775px;top:79px;width:8px;height:8px;background:#fff;border:1px solid #303030;box-shadow:inset 0 1px #fff,inset 0 2px #303030"></div>
<div class="a ck" style="left:618px;top:99px;width:23px;height:22px;box-shadow:inset 1px 1px #808080,inset -1px -1px #fff"></div>
<div class="a ck" style="left:641px;top:99px;width:23px;height:22px;box-shadow:inset 1px 1px #808080,inset -1px -1px #fff"></div>
<svg class="a" style="left:622px;top:104px;" width="16" height="15" viewBox="0 0 16 15"><rect x="3.5" y="6.5" width="12" height="8" fill="#EEF4FA" stroke="#B8A060"/><path d="M13,14.5 L15.5,12v2.5z" fill="#D8B860"/><path d="M5,11.5h2M8,11.5h2M11,11.5h2" stroke="#3060A8" stroke-width="2"/><path d="M2,1.5 C5,0 6,3 4,6 C3,8 1,9 0.5,8 M3,4 L7,9 M7,3 L2,9" fill="none" stroke="#3868B0" stroke-width="1.3"/></svg>
<svg class="a" style="left:646px;top:105px;" width="16" height="13" viewBox="0 0 16 13"><path d="M0.5,4.5 H5 V2 L9,6 L5,10 V7.5 H0.5z" fill="#F8D860" stroke="#B08820"/><path d="M11.5,1 V12 H14" fill="none" stroke="#3060B0" stroke-width="1.2"/><path d="M9.5,3.5 L11.5,0.5 L13.5,3.5" fill="#3060B0"/><rect x="12.5" y="5.5" width="3" height="3" fill="#F07080" stroke="#D04050"/><rect x="12.5" y="9.5" width="3" height="3" fill="#F07080" stroke="#D04050"/><path d="M13,2.5h3" stroke="#3060B0"/></svg>
<svg class="a" style="left:668px;top:103px;" width="16" height="16" viewBox="0 0 16 16"><rect x="1.5" y="1.5" width="10" height="10" fill="#E4F4FC" stroke="#A0B0D0"/><rect x="3.5" y="3.5" width="10" height="10" fill="#EEF8FE" stroke="#8890A8" stroke-width="1.2"/><path d="M5.5,8.5h6" stroke="#104A8A" stroke-width="1.6" stroke-linecap="round"/></svg>
<div class="a" style="left:689px;top:100px;width:1px;height:20px;background:#808080;"></div>
<div class="a" style="left:690px;top:100px;width:1px;height:20px;background:#fff;"></div>
<svg class="a" style="left:699px;top:103px;" width="13" height="13" viewBox="0 0 13 13"><path d="M0.5,0.5 H6 L0.5,6z" fill="#E8E8E8"/><path d="M1,11 L11,1" stroke="#A0A0A0" stroke-width="1.2"/><path d="M9,6v7M5.5,9.5h7" stroke="#707070" stroke-width="2"/></svg>
<svg class="a" style="left:724px;top:104px;" width="12" height="12" viewBox="0 0 12 12"><path d="M1.5,1.5 L10.5,10.5 M10.5,1.5 L1.5,10.5" stroke="#C8C8C8" stroke-width="3"/></svg>
<svg class="a" style="left:742px;top:99px;" width="22" height="22" viewBox="0 0 22 22"><path d="M4.5,3.5 L13.5,11.5 M13.5,3.5 L4.5,11.5" stroke="#707070" stroke-width="4" stroke-linecap="round"/><path d="M4.5,3.5 L13.5,11.5 M13.5,3.5 L4.5,11.5" stroke="#F4F4F4" stroke-width="2" stroke-linecap="round"/><path d="M9,8.5 L17.5,16.5 M17.5,8.5 L9,16.5" stroke="#505050" stroke-width="4.4" stroke-linecap="round"/><path d="M9,8.5 L17.5,16.5 M17.5,8.5 L9,16.5" stroke="#8C8C8C" stroke-width="2.2" stroke-linecap="round"/></svg>
<svg class="a" style="left:771px;top:108px;" width="11" height="6" viewBox="0 0 11 6"><path d="M0,0 H11 L5.5,5.5z" fill="#2A2A6A"/><path d="M0,0 L5.5,5.5" stroke="#8080A0" stroke-width="0.6"/></svg>
<div class="a" style="left:404px;top:212px;width:384px;height:3px;background:#D4D0C8;"></div>
<svg class="a" style="left:777px;top:219px;" width="7" height="5" viewBox="0 0 7 5" shape-rendering="crispEdges"><path d="M2,0h1v1h1v1h1v1h-5v-1h1v-1h1z" fill="#808080"/><path d="M1,3h5v1h-5z" fill="#fff"/></svg>
<svg class="a" style="left:777px;top:232px;" width="7" height="5" viewBox="0 0 7 5" shape-rendering="crispEdges"><path d="M0,0h5v1h-1v1h-1v1h-1v-1h-1v-1h-1z" fill="#808080"/><path d="M4,2h1v-1h1v1h-1v1h-1v1h-1v-1h1z" fill="#fff"/></svg>
<svg class="a" style="left:410px;top:245px;" width="4" height="7" viewBox="0 0 4 7" shape-rendering="crispEdges"><path d="M3,0h1v7h-1v-1h-1v-1h-1v-1h-1v-1h1v-1h1v-1h1z" fill="#fff"/></svg>
<svg class="a" style="left:409px;top:244px;" width="4" height="7" viewBox="0 0 4 7" shape-rendering="crispEdges"><path d="M3,0h1v7h-1v-1h-1v-1h-1v-1h-1v-1h1v-1h1v-1h1z" fill="#808080"/></svg>
<svg class="a" style="left:763px;top:245px;" width="4" height="7" viewBox="0 0 4 7" shape-rendering="crispEdges"><path d="M0,0h1v1h1v1h1v1h1v1h-1v1h-1v1h-1v1h-1z" fill="#fff"/></svg>
<svg class="a" style="left:762px;top:244px;" width="4" height="7" viewBox="0 0 4 7" shape-rendering="crispEdges"><path d="M0,0h1v1h1v1h1v1h1v1h-1v1h-1v1h-1v1h-1z" fill="#808080"/></svg>
<div class="a" style="left:772px;top:240px;width:16px;height:16px;background:#D4D0C8;"></div>
<svg class="a" style="left:16px;top:267px;" width="12" height="15" viewBox="0 0 12 15"><path d="M0.5,0.5h7l3,3v10h-10z" fill="#fff" stroke="#707070"/><path d="M7.5,0.5v3h3" fill="#F0E0A0" stroke="#707070"/><circle cx="2" cy="2" r="0.8" fill="#F0C040"/><circle cx="8.5" cy="2.5" r="0.8" fill="#F0C040"/><path d="M8,5.5 L7,4.5 H5 L4,5.5 V9.5 L5,10.5 H7 L8,9.5" fill="none" stroke="#3030C8" stroke-width="1.6" stroke-linejoin="round"/></svg>
<div class="a t" style="left:30px;top:268.69px;font:11px/13px 'Liberation Sans',sans-serif;color:#000;">main.cpp</div>
<svg class="a" style="left:79px;top:269px;" width="10" height="10" viewBox="0 0 10 10" shape-rendering="crispEdges"><path d="M0.5,0.5 L2.5,0.5 L4.5,2.5 L5.5,2.5 L7.5,0.5 L9.5,0.5 L9.5,2.5 L7.5,4.5 L7.5,5.5 L9.5,7.5 L9.5,9.5 L7.5,9.5 L5.5,7.5 L4.5,7.5 L2.5,9.5 L0.5,9.5 L0.5,7.5 L2.5,5.5 L2.5,4.5 L0.5,2.5Z" fill="#fff" stroke="#505050" stroke-width="1"/></svg>
<div class="a" style="left:576px;top:268px;width:8px;height:8px;background:#fff;border:1px solid #303030;box-shadow:inset 0 1px #fff,inset 0 2px #303030"></div>
<div class="a" style="left:24px;top:288px;width:5px;height:103px;background:#fff;"></div>
<div class="a" style="left:29px;top:288px;width:2px;height:103px;background:#D4D0C8;"></div>
<div class="a" style="left:31px;top:322px;width:528px;height:17px;background:#E0E8DE;"></div>
<svg class="a" style="left:14px;top:292px;" width="9" height="9" viewBox="0 0 9 9"><circle cx="4.5" cy="4.5" r="4.5" fill="#fff"/><defs><radialGradient id="bpg" cx="0.35" cy="0.35" r="0.7"><stop offset="0" stop-color="#50B8D8"/><stop offset="0.7" stop-color="#2A7AB0"/><stop offset="1" stop-color="#1A3A70"/></radialGradient></defs><circle cx="4.5" cy="4.5" r="3.6" fill="url(#bpg)"/></svg>
<svg class="a" style="left:14px;top:326px;" width="9" height="9" viewBox="0 0 9 9"><circle cx="4.5" cy="4.5" r="4.5" fill="#fff"/><defs><radialGradient id="bpg" cx="0.35" cy="0.35" r="0.7"><stop offset="0" stop-color="#50B8D8"/><stop offset="0.7" stop-color="#2A7AB0"/><stop offset="1" stop-color="#1A3A70"/></radialGradient></defs><circle cx="4.5" cy="4.5" r="3.6" fill="url(#bpg)"/></svg>
<div class="a t" style="left:63px;top:288.88px;font:13.33px/17px 'Liberation Mono',monospace;color:#000;">cout &lt;&lt; <span style="color:#2A00FF">"Enter your name: "</span>;</div>
<div class="a t" style="left:63px;top:305.88px;font:13.33px/17px 'Liberation Mono',monospace;color:#000;">cin  &gt;&gt; yourName;</div>
<div class="a t" style="left:63px;top:322.88px;font:13.33px/17px 'Liberation Mono',monospace;color:#000;">cout &lt;&lt; <span style="color:#2A00FF">"Hello "</span> + yourName &lt;&lt; endl;</div>
<div class="a t" style="left:63px;top:356.88px;font:13.33px/17px 'Liberation Mono',monospace;color:#000;"><b style="color:#7F0055">return</b> 0;</div>
<div class="a t" style="left:31px;top:373.88px;font:13.33px/17px 'Liberation Mono',monospace;color:#000;">}</div>
<svg class="a" style="left:563px;top:294px;" width="7" height="4" viewBox="0 0 7 4" shape-rendering="crispEdges"><path d="M3,0h1v1h1v1h1v1h1v1h-7v-1h1v-1h1v-1h1z" fill="#000"/></svg>
<svg class="a" style="left:563px;top:381px;" width="7" height="4" viewBox="0 0 7 4" shape-rendering="crispEdges"><path d="M0,0h7v1h-1v1h-1v1h-1v1h-1v-1h-1v-1h-1v-1h-1z" fill="#000"/></svg>
<svg class="a" style="left:37px;top:396px;" width="4" height="7" viewBox="0 0 4 7" shape-rendering="crispEdges"><path d="M3,0h1v7h-1v-1h-1v-1h-1v-1h-1v-1h1v-1h1v-1h1z" fill="#fff"/></svg>
<svg class="a" style="left:36px;top:395px;" width="4" height="7" viewBox="0 0 4 7" shape-rendering="crispEdges"><path d="M3,0h1v7h-1v-1h-1v-1h-1v-1h-1v-1h1v-1h1v-1h1z" fill="#808080"/></svg>
<svg class="a" style="left:550px;top:396px;" width="4" height="7" viewBox="0 0 4 7" shape-rendering="crispEdges"><path d="M0,0h1v1h1v1h1v1h1v1h-1v1h-1v1h-1v1h-1z" fill="#fff"/></svg>
<svg class="a" style="left:549px;top:395px;" width="4" height="7" viewBox="0 0 4 7" shape-rendering="crispEdges"><path d="M0,0h1v1h1v1h1v1h1v1h-1v1h-1v1h-1v1h-1z" fill="#808080"/></svg>
<div class="a" style="left:559px;top:391px;width:16px;height:16px;background:#D4D0C8;"></div>
<svg class="a" style="left:601px;top:266px;" width="14" height="15" viewBox="0 0 14 15"><rect x="0.5" y="0.5" width="5" height="5" fill="#A8D8F8" stroke="#2070C0"/><rect x="0.5" y="9.5" width="5" height="5" fill="#A8D8F8" stroke="#2070C0"/><path d="M7,2.5h6M9,7.5h4M7,12.5h6" stroke="#2070C0"/><rect x="6.5" y="6.5" width="2" height="2" fill="none" stroke="#2070C0"/></svg>
<div class="a t" style="left:616px;top:268.69px;font:11px/13px 'Liberation Sans',sans-serif;color:#000;">Outline</div>
<svg class="a" style="left:656px;top:269px;" width="10" height="10" viewBox="0 0 10 10" shape-rendering="crispEdges"><path d="M0.5,0.5 L2.5,0.5 L4.5,2.5 L5.5,2.5 L7.5,0.5 L9.5,0.5 L9.5,2.5 L7.5,4.5 L7.5,5.5 L9.5,7.5 L9.5,9.5 L7.5,9.5 L5.5,7.5 L4.5,7.5 L2.5,9.5 L0.5,9.5 L0.5,7.5 L2.5,5.5 L2.5,4.5 L0.5,2.5Z" fill="#fff" stroke="#505050" stroke-width="1"/></svg>
<div class="a" style="left:759px;top:268px;width:8px;height:2px;background:#fff;border:1px solid #303030"></div>
<div class="a" style="left:775px;top:268px;width:8px;height:8px;background:#fff;border:1px solid #303030;box-shadow:inset 0 1px #fff,inset 0 2px #303030"></div>
<svg class="a" style="left:699px;top:292px;" width="17" height="15" viewBox="0 0 17 15"><path d="M2.5,1v12" stroke="#000" stroke-width="1.2"/><path d="M0,9.5 L2.5,13.5 L5,9.5" fill="none" stroke="#000" stroke-width="1.2"/><text x="4.6" y="7.3" font-family="Liberation Sans" font-weight="bold" font-size="10.5" fill="#4A80C8">a</text><text x="9.6" y="14.8" font-family="Liberation Sans" font-weight="bold" font-size="10.5" fill="#8A3A8A">z</text></svg>
<svg class="a" style="left:724px;top:294px;" width="14" height="13" viewBox="0 0 14 13"><circle cx="6.5" cy="5.5" r="5" fill="#3A7AD0" stroke="#2A5AA0"/><text x="4" y="9" font-family="Liberation Sans" font-weight="bold" font-size="8" fill="#fff">F</text><path d="M0.5,0.5 L12.5,12.5" stroke="#1A2A7A" stroke-width="1.2"/></svg>
<svg class="a" style="left:747px;top:292px;" width="14" height="15" viewBox="0 0 14 15"><circle cx="4.5" cy="10" r="2.6" fill="#A8A8A8" stroke="#808080"/><path d="M0.5,4.5 L10,14" stroke="#1A2A7A" stroke-width="1.2"/><text x="7.2" y="7.5" font-family="Liberation Sans" font-weight="bold" font-size="8.5" fill="#D00000">S</text></svg>
<svg class="a" style="left:771px;top:294px;" width="9" height="9" viewBox="0 0 9 9"><circle cx="4.5" cy="4.5" r="4" fill="#8CC060" stroke="#3A8A3A" stroke-width="1"/></svg>
<div class="a" style="left:648px;top:312px;width:45px;height:16px;background:#D4D0C8;"></div>
<div class="a" style="left:609px;top:320px;width:1px;height:33px;background:repeating-linear-gradient(to bottom,#808080 0 1px,transparent 1px 2px)"></div>
<div class="a" style="left:609px;top:320px;width:14px;height:1px;background:repeating-linear-gradient(to right,#808080 0 1px,transparent 1px 2px)"></div>
<div class="a" style="left:609px;top:336px;width:14px;height:1px;background:repeating-linear-gradient(to right,#808080 0 1px,transparent 1px 2px)"></div>
<div class="a" style="left:609px;top:352px;width:14px;height:1px;background:repeating-linear-gradient(to right,#808080 0 1px,transparent 1px 2px)"></div>
<svg class="a" style="left:626px;top:315px;" width="11" height="11" viewBox="0 0 11 11" shape-rendering="crispEdges"><path d="M0,0h5v5h-5z" fill="#2890D0"/><path d="M6,0h5v11h-11v-5h6z" fill="#2070C0"/><path d="M7,1h3v9h-9v-3h6z" fill="#40A8E0"/><path d="M0,0h5v1h-5zM0,0h1v5h-1z" fill="#1A50A0"/><path d="M0,10h11v1h-11zM10,0h1v11h-1z" fill="#1A3A90"/></svg>
<svg class="a" style="left:626px;top:331px;" width="11" height="11" viewBox="0 0 11 11" shape-rendering="crispEdges"><path d="M0,0h5v5h-5z" fill="#2890D0"/><path d="M6,0h5v11h-11v-5h6z" fill="#2070C0"/><path d="M7,1h3v9h-9v-3h6z" fill="#40A8E0"/><path d="M0,0h5v1h-5zM0,0h1v5h-1z" fill="#1A50A0"/><path d="M0,10h11v1h-11zM10,0h1v11h-1z" fill="#1A3A90"/></svg>
<svg class="a" style="left:627px;top:348px;" width="8.0" height="8.0" viewBox="0 0 8.0 8.0"><circle cx="4.0" cy="4.0" r="3.5" fill="#8CC060" stroke="#3A8A3A" stroke-width="1"/></svg>
<div class="a t" style="left:649px;top:313.69px;font:11px/13px 'Liberation Sans',sans-serif;color:#000;">iostream</div>
<div class="a t" style="left:649px;top:329.69px;font:11px/13px 'Liberation Sans',sans-serif;color:#000;">string</div>
<div class="a t" style="left:649px;top:345.69px;font:11px/13px 'Liberation Sans',sans-serif;color:#000;">main() : int</div>
<svg class="a" style="left:15px;top:418px;" width="13" height="14" viewBox="0 0 13 14"><rect x="1" y="1" width="11" height="8.5" fill="#E0F0FC" stroke="#2A5AB0" stroke-width="2"/><path d="M3.5,3.5h4M3.5,5.5h6" stroke="#3A6AC0"/><path d="M6.5,10v2" stroke="#2A5AB0" stroke-width="2"/><path d="M1.5,12.5h10" stroke="#2A5AB0" stroke-width="1.4"/></svg>
<div class="a t" style="left:30px;top:419.69px;font:11px/13px 'Liberation Sans',sans-serif;color:#000;">Console</div>
<svg class="a" style="left:74px;top:420px;" width="10" height="10" viewBox="0 0 10 10" shape-rendering="crispEdges"><path d="M0.5,0.5 L2.5,0.5 L4.5,2.5 L5.5,2.5 L7.5,0.5 L9.5,0.5 L9.5,2.5 L7.5,4.5 L7.5,5.5 L9.5,7.5 L9.5,9.5 L7.5,9.5 L5.5,7.5 L4.5,7.5 L2.5,9.5 L0.5,9.5 L0.5,7.5 L2.5,5.5 L2.5,4.5 L0.5,2.5Z" fill="#fff" stroke="#505050" stroke-width="1"/></svg>
<div class="a t" style="left:107px;top:419.69px;font:11px/13px 'Liberation Sans',sans-serif;color:#000;">Tasks</div>
<svg class="a" style="left:594px;top:420px;" width="12" height="12" viewBox="0 0 12 12"><rect x="0.5" y="0.5" width="10" height="10" fill="#D8C0C4" stroke="#C8C4C0"/><rect x="2" y="2" width="7" height="7" fill="#CCB0B8"/></svg>
<svg class="a" style="left:612px;top:414px;" width="22" height="22" viewBox="0 0 22 22"><path d="M4.5,3.5 L13.5,11.5 M13.5,3.5 L4.5,11.5" stroke="#707070" stroke-width="4" stroke-linecap="round"/><path d="M4.5,3.5 L13.5,11.5 M13.5,3.5 L4.5,11.5" stroke="#F4F4F4" stroke-width="2" stroke-linecap="round"/><path d="M9,8.5 L17.5,16.5 M17.5,8.5 L9,16.5" stroke="#505050" stroke-width="4.4" stroke-linecap="round"/><path d="M9,8.5 L17.5,16.5 M17.5,8.5 L9,16.5" stroke="#8C8C8C" stroke-width="2.2" stroke-linecap="round"/></svg>
<div class="a" style="left:637px;top:416px;width:1px;height:18px;background:#808080;"></div>
<div class="a" style="left:638px;top:416px;width:1px;height:18px;background:#fff;"></div>
<svg class="a" style="left:646px;top:418px;" width="15" height="15" viewBox="0 0 15 15"><rect x="0.5" y="0.5" width="14" height="13" fill="#EEF6FC" stroke="#8A8A80"/><rect x="9.5" y="0.5" width="5" height="13" fill="#DCE8F4" stroke="#8A8A80"/><path d="M11,3h2M11,7h2M11,11h2" stroke="#3060B0"/><path d="M3,9 V7.5 A2,2 0 0 1 7,7.5 V9" fill="none" stroke="#A08020" stroke-width="1.2"/><rect x="1.5" y="9" width="7" height="5" fill="#F0C040" stroke="#A08020"/></svg>
<svg class="a" style="left:669px;top:418px;" width="16" height="14" viewBox="0 0 16 14"><path d="M5,1.5 L14,1.5 L9,11.5 L0.5,11.5z" fill="#F8F0E0" stroke="#B0A080"/><path d="M2,8.5 L11,8.5" stroke="#C8B898"/><path d="M4,12.5h11" stroke="#A09070"/></svg>
<div class="a" style="left:691px;top:416px;width:1px;height:18px;background:#808080;"></div>
<div class="a" style="left:692px;top:416px;width:1px;height:18px;background:#fff;"></div>
<svg class="a" style="left:701px;top:418px;" width="15" height="14" viewBox="0 0 15 14"><rect x="0.5" y="3.5" width="12" height="9" fill="#EAF4FC" stroke="#A0A8B0"/><rect x="1" y="4" width="11" height="2" fill="#4A80C8"/><path d="M8,7 L12.5,2.5" stroke="#2A8A2A" stroke-width="2.5"/><circle cx="12" cy="2.5" r="2.2" fill="#3AA03A"/><path d="M4,10 L8,7" stroke="#404040"/></svg>
<svg class="a" style="left:724px;top:418px;" width="13" height="14" viewBox="0 0 13 14"><rect x="0.75" y="0.75" width="11.5" height="9" fill="#D8ECFC" stroke="#2A5AB0" stroke-width="1.5"/><path d="M3,3.5h5M3,5.5h6" stroke="#2A5AB0"/><path d="M6.5,10v2M2,12.5h9" stroke="#2A5AB0" stroke-width="1.4"/></svg>
<svg class="a" style="left:746px;top:424px;" width="5" height="3" viewBox="0 0 5 3" shape-rendering="crispEdges"><path d="M0,0h5v1h-1v1h-1v1h-1v-1h-1v-1h-1z" fill="#000"/></svg>
<div class="a" style="left:759px;top:419px;width:8px;height:2px;background:#fff;border:1px solid #303030"></div>
<div class="a" style="left:775px;top:419px;width:8px;height:8px;background:#fff;border:1px solid #303030;box-shadow:inset 0 1px #fff,inset 0 2px #303030"></div>
<div class="a t" style="left:12px;top:439.69px;font:11px/13px 'Liberation Sans',sans-serif;color:#000;letter-spacing:0.03px;">&lt;terminated&gt; HelloWorld [C/C++ Local] C:\MySrcProject\hello.exe (7/30/04 4:03 PM)</div>
<svg class="a" style="left:777px;top:461px;" width="7" height="4" viewBox="0 0 7 4" shape-rendering="crispEdges"><path d="M3,0h1v1h1v1h1v1h1v1h-7v-1h1v-1h1v-1h1z" fill="#fff"/></svg>
<svg class="a" style="left:776px;top:460px;" width="7" height="4" viewBox="0 0 7 4" shape-rendering="crispEdges"><path d="M3,0h1v1h1v1h1v1h1v1h-7v-1h1v-1h1v-1h1z" fill="#808080"/></svg>
<svg class="a" style="left:777px;top:544px;" width="7" height="4" viewBox="0 0 7 4" shape-rendering="crispEdges"><path d="M0,0h7v1h-1v1h-1v1h-1v1h-1v-1h-1v-1h-1v-1h-1z" fill="#fff"/></svg>
<svg class="a" style="left:776px;top:543px;" width="7" height="4" viewBox="0 0 7 4" shape-rendering="crispEdges"><path d="M0,0h7v1h-1v1h-1v1h-1v1h-1v-1h-1v-1h-1v-1h-1z" fill="#808080"/></svg>
<svg class="a" style="left:18px;top:558px;" width="4" height="7" viewBox="0 0 4 7" shape-rendering="crispEdges"><path d="M3,0h1v7h-1v-1h-1v-1h-1v-1h-1v-1h1v-1h1v-1h1z" fill="#fff"/></svg>
<svg class="a" style="left:17px;top:557px;" width="4" height="7" viewBox="0 0 4 7" shape-rendering="crispEdges"><path d="M3,0h1v7h-1v-1h-1v-1h-1v-1h-1v-1h1v-1h1v-1h1z" fill="#808080"/></svg>
<svg class="a" style="left:763px;top:558px;" width="4" height="7" viewBox="0 0 4 7" shape-rendering="crispEdges"><path d="M0,0h1v1h1v1h1v1h1v1h-1v1h-1v1h-1v1h-1z" fill="#fff"/></svg>
<svg class="a" style="left:762px;top:557px;" width="4" height="7" viewBox="0 0 4 7" shape-rendering="crispEdges"><path d="M0,0h1v1h1v1h1v1h1v1h-1v1h-1v1h-1v1h-1z" fill="#808080"/></svg>
<div class="a" style="left:772px;top:553px;width:16px;height:16px;background:#D4D0C8;"></div></body></html>
